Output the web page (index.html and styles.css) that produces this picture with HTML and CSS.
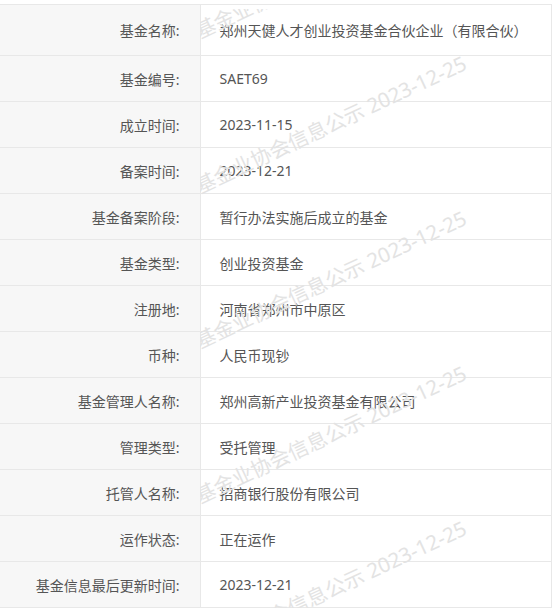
FILE: index.html
```html
<!DOCTYPE html>
<html lang="zh-CN">
<head>
    <meta charset="UTF-8">
    <title>基金公示信息</title>
    <link rel="stylesheet" href="styles.css">
</head>
<body>
    <div class="info-wrap">
        <table class="info-table">
            <tr class="first-row"><th>基金名称:</th><td>郑州天健人才创业投资基金合伙企业（有限合伙）</td></tr>
            <tr><th>基金编号:</th><td>SAET69</td></tr>
            <tr><th>成立时间:</th><td>2023-11-15</td></tr>
            <tr><th>备案时间:</th><td>2023-12-21</td></tr>
            <tr><th>基金备案阶段:</th><td>暂行办法实施后成立的基金</td></tr>
            <tr><th>基金类型:</th><td>创业投资基金</td></tr>
            <tr><th>注册地:</th><td>河南省郑州市中原区</td></tr>
            <tr><th>币种:</th><td>人民币现钞</td></tr>
            <tr><th>基金管理人名称:</th><td>郑州高新产业投资基金有限公司</td></tr>
            <tr><th>管理类型:</th><td>受托管理</td></tr>
            <tr><th>托管人名称:</th><td>招商银行股份有限公司</td></tr>
            <tr><th>运作状态:</th><td>正在运作</td></tr>
            <tr><th>基金信息最后更新时间:</th><td>2023-12-21</td></tr>
        </table>

        <div class="watermark">
            <span class="wm wm-1">基金业协会信息公示 2023-12-25</span>
            <span class="wm wm-2">基金业协会信息公示 2023-12-25</span>
            <span class="wm wm-3">基金业协会信息公示 2023-12-25</span>
            <span class="wm wm-4">基金业协会信息公示 2023-12-25</span>
            <span class="wm wm-5">基金业协会信息公示 2023-12-25</span>
        </div>
    </div>
</body>
</html>
```

FILE: styles.css
```css
:root {
    --line: #e8e8e8;
    --label-bg: #f7f7f7;
    --text: #555555;
    --mark: #e3e3e3;
}

* {
    margin: 0;
    padding: 0;
    box-sizing: border-box;
}

body {
    background: #ffffff;
    font-family: "Noto Sans", "Noto Sans CJK SC", sans-serif;
    font-size: 14px;
    color: var(--text);
    padding-top: 4px;
}

.info-wrap {
    position: relative;
    width: 552px;
}

.info-table {
    width: 100%;
    border-collapse: collapse;
    border-top: 1px solid var(--line);
    border-right: 1px solid var(--line);
}

.info-table th,
.info-table td {
    height: 46px;
    border-bottom: 1px solid var(--line);
    font-weight: normal;
    vertical-align: middle;
}

.info-table .first-row th,
.info-table .first-row td {
    height: 51px;
}

.info-table th {
    width: 200px;
    padding-right: 20px;
    text-align: right;
    background: var(--label-bg);
    border-right: 1px solid var(--line);
}

.info-table td {
    padding-left: 19px;
    text-align: left;
}

/* 水印 */
.watermark {
    position: absolute;
    top: 5px;
    left: 200px;
    right: 0;
    bottom: 0;
    overflow: hidden;
    pointer-events: none;
}

.wm {
    position: absolute;
    left: 0;
    white-space: nowrap;
    font-size: 20.5px;
    line-height: 20px;
    color: var(--mark);
    transform-origin: 0 100%;
    transform: rotate(-25deg);
}

.wm-1 { top: 12px; }
.wm-2 { top: 167px; }
.wm-3 { top: 322px; }
.wm-4 { top: 477px; }
.wm-5 { top: 632px; }
```
